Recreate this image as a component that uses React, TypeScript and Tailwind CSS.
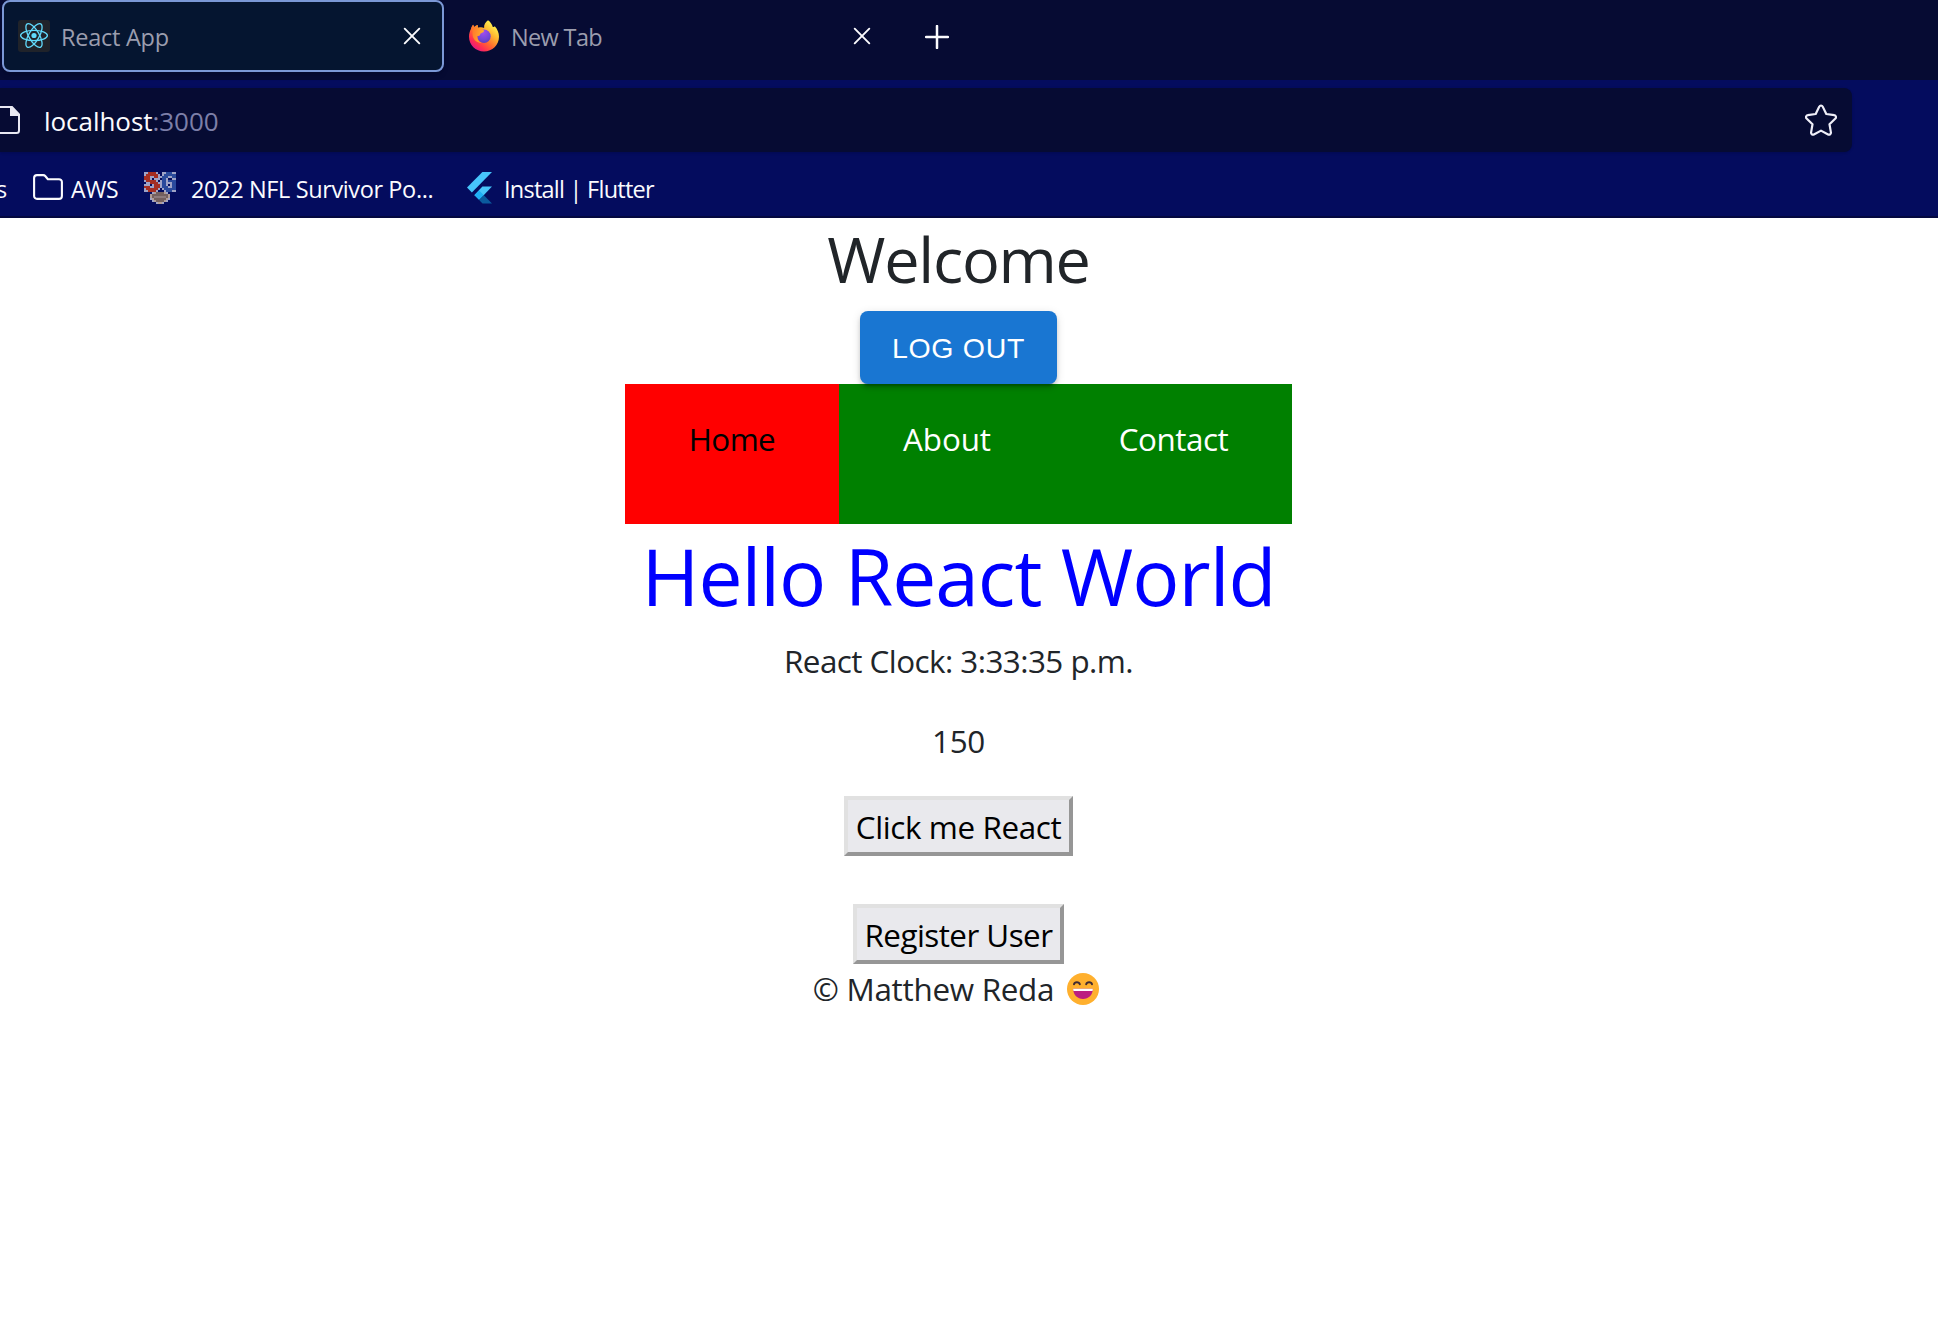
import React from "react";

function ReactIcon() {
  return (
    <svg viewBox="0 0 32 32" className="size-8 shrink-0" aria-hidden="true">
      <rect width="32" height="32" rx="3" fill="#20232a" />
      <g fill="none" stroke="#61dafb" strokeWidth="1.3">
        <ellipse cx="16" cy="15.5" rx="13.4" ry="5.2" />
        <ellipse cx="16" cy="15.5" rx="13.4" ry="5.2" transform="rotate(60 16 15.5)" />
        <ellipse cx="16" cy="15.5" rx="13.4" ry="5.2" transform="rotate(120 16 15.5)" />
      </g>
      <circle cx="16" cy="15.5" r="2.6" fill="#61dafb" />
    </svg>
  );
}

function FirefoxIcon() {
  return (
    <svg viewBox="0 0 32 32" className="size-8 shrink-0" aria-hidden="true">
      <defs>
        <linearGradient id="fxBody" x1="0.88" y1="0.1" x2="0.2" y2="0.95">
          <stop offset="0.05" stopColor="#fff44f" />
          <stop offset="0.35" stopColor="#ffb02e" />
          <stop offset="0.6" stopColor="#ff6a2f" />
          <stop offset="0.82" stopColor="#ff2f52" />
          <stop offset="1" stopColor="#e31587" />
        </linearGradient>
        <radialGradient id="fxGlobe" cx="0.45" cy="0.2" r="0.9">
          <stop offset="0" stopColor="#a34cf0" />
          <stop offset="0.6" stopColor="#7147d8" />
          <stop offset="1" stopColor="#5a3bb5" />
        </radialGradient>
        <linearGradient id="fxHead" x1="0" y1="0" x2="1" y2="0.3">
          <stop offset="0" stopColor="#ff6d2c" />
          <stop offset="1" stopColor="#ffb02c" />
        </linearGradient>
      </defs>
      <path
        d="M20 0.3c2.4 1.6 4 4 4.8 6.6 1 .3 1.6-.1 2-.6 2.6 3 4.200 6.500 4.200 10.500C31 25 24.400 31.500 16 31.500S1 25 1 16.800c0-3 .8-5.800 2.200-8.200.2-1.300.9-2.800 2-3.800.2 1 .6 1.700 1.200 2.200C7.300 6 8.400 5.300 9.700 5c-.2 1 0 2 .5 2.700 1.700-.5 4-.7 5.900.2C15.800 4.900 17.500 1.900 20 .3z"
        fill="url(#fxBody)"
      />
      <circle cx="16" cy="16.300" r="6.700" fill="url(#fxGlobe)" />
      <path
        d="M3.200 8.800c.2-1.400.9-2.900 2-4 .2 1 .6 1.700 1.200 2.200C7.300 6 8.400 5.300 9.700 5c-.2 1.700.6 3 1.800 4 1.500.6 3.500.6 4.700 1.700-.4 1.800-2.400 1.900-3.500 2.700-1 .9.200 2.300-3.300 2.600-.3 3 1.400 6 4.600 7-5.500 0-9.500-4-9.500-9 0-2 .3-3.700-1.300-5.200z"
        fill="url(#fxHead)"
      />
    </svg>
  );
}

function CloseIcon() {
  return (
    <svg viewBox="0 0 18 18" className="size-[18px] shrink-0" aria-hidden="true">
      <path d="M1.700 1.700l14.600 14.600M16.300 1.700L1.700 16.300" stroke="#fbfbfe" strokeWidth="1.900" strokeLinecap="round" />
    </svg>
  );
}

function PlusIcon() {
  return (
    <svg viewBox="0 0 24 24" className="size-6 shrink-0" aria-hidden="true">
      <path d="M12 1v22M1 12h22" stroke="#fbfbfe" strokeWidth="2.500" strokeLinecap="round" />
    </svg>
  );
}

function PageIcon() {
  return (
    <svg viewBox="0 0 20 28" className="h-7 w-5 shrink-0" aria-hidden="true">
      <path
        d="M-4 1h16L19 8.500V24.500a2.500 2.500 0 0 1-2.500 2.500H-4"
        fill="none"
        stroke="#e8e8f2"
        strokeWidth="2"
      />
      <path d="M10 1.500h2.500l6.500 7v1.500h-9z" fill="#e8e8f2" />
    </svg>
  );
}

function StarIcon() {
  return (
    <svg viewBox="0 0 32 32" className="size-8 shrink-0" aria-hidden="true">
      <path
        d="M14.300 2.600c.7-1.500 2.700-1.500 3.400 0l3.600 7.400 8 1.200c1.600.2 2.300 2.200 1.100 3.300l-5.900 5.800 1.400 8.100c.3 1.600-1.400 2.800-2.800 2.100L16 26.600l-7.100 3.900c-1.400.7-3.100-.5-2.800-2.100l1.400-8.100-5.900-5.800c-1.200-1.100-.5-3.100 1.100-3.300l8-1.200z"
        fill="none"
        stroke="#eeeef8"
        strokeWidth="2.200"
        strokeLinejoin="round"
      />
    </svg>
  );
}

function FolderIcon() {
  return (
    <svg viewBox="0 0 30 26" className="h-[26px] w-[30px] shrink-0" aria-hidden="true">
      <path
        d="M4 1.100h6.200c.8 0 1.500.3 2 .9l2.700 3.200H26a2.900 2.900 0 0 1 2.900 2.900V22a2.900 2.900 0 0 1-2.900 2.900H4A2.900 2.900 0 0 1 1.100 22V4A2.900 2.900 0 0 1 4 1.100z"
        fill="none"
        stroke="#fbfbfe"
        strokeWidth="2.100"
        strokeLinejoin="round"
      />
    </svg>
  );
}

const poolPixels = [
  "wwrrrrw..wwbbbww",
  "wrrrrrrw.wbbbbbb",
  "rrrwwrrwwbbbwwbb",
  "rrrw.www.bbw..ww",
  "wrrrrrw.wbbwbbbb",
  ".wwrrrrwwbbwwwbb",
  "www.wrrrwbbw.wbb",
  "rrrwwrrrwbbbwwbb",
  "wrrrrrrw.wbbbbbb",
  "wwrrrrw...wbbbww",
  "....wtddddtw....",
  "...tddddddddt...",
  "...tdggggggdt...",
  "...wtddddddtw...",
  "....wtddddtw....",
  "......wttw......",
];

const poolColors: Record<string, string> = {
  w: "#9fa3c6",
  r: "#a52e22",
  b: "#2a4a9c",
  t: "#b09c96",
  d: "#74605f",
  g: "#8d7b7c",
};

function PoolIcon() {
  return (
    <svg viewBox="0 0 16 16" className="size-8 shrink-0" shapeRendering="crispEdges" aria-hidden="true">
      {poolPixels.flatMap((row, y) =>
        row.split("").map((p, x) =>
          p === "." ? null : <rect key={`${x}-${y}`} x={x} y={y} width="1" height="1" fill={poolColors[p]} />
        )
      )}
    </svg>
  );
}

function FlutterIcon() {
  return (
    <svg viewBox="0 0 25 32" className="h-8 w-[25px] shrink-0" aria-hidden="true">
      <path d="M15.400 0H25L4.900 20.400 0 15.600z" fill="#47c5fb" />
      <path d="M15.400 14.600H25L16.700 23.200l-5 .200-4.400-.2z" fill="#47c5fb" />
      <path d="M7.300 23.200l4.800-4.800 4.800 4.800-4.800 4.800z" fill="#1fb0f6" />
      <path d="M12.100 28l4.800-4.800L25 31.500h-9.500z" fill="#0b5a9e" />
    </svg>
  );
}

function GrinEmoji() {
  return (
    <svg viewBox="0 0 32 32" className="size-8 shrink-0" role="img" aria-label="Grinning face with smiling eyes">
      <circle cx="16" cy="16" r="16" fill="#ffb02e" />
      <path
        d="M7 11.200c.7-2.600 5-2.600 5.800 0M19.200 11.200c.8-2.600 5.100-2.600 5.800 0"
        fill="none"
        stroke="#402a32"
        strokeWidth="2"
        strokeLinecap="round"
      />
      <path d="M6.200 15.700h19.600c0 6-4.200 10.300-9.800 10.300S6.200 21.700 6.200 15.700z" fill="#bb1d80" />
      <path d="M6.200 15.700h19.600c0 .9-.1 1.600-.3 2.300h-19c-.2-.7-.3-1.400-.3-2.300z" fill="#fff" />
    </svg>
  );
}

function TabStrip() {
  return (
    <div className="flex h-20 bg-[#060b33] pl-0.5 text-[23.5px] text-[#9b9dae]">
      <div className="flex h-[72px] w-[442px] items-center rounded-lg border-2 border-[#7b98d6] bg-[#051530] pr-[21px] pl-3.5 shadow-md">
        <div className="flex items-center gap-[11px]">
          <ReactIcon />
          <span className="pt-1 tracking-[-0.25px]">React App</span>
        </div>
        <div className="ml-auto">
          <CloseIcon />
        </div>
      </div>
      <div className="flex h-[72px] w-[427px] items-center pl-6">
        <FirefoxIcon />
        <span className="ml-[11px] pt-1 tracking-[-0.65px]">New Tab</span>
        <div className="ml-auto">
          <CloseIcon />
        </div>
      </div>
      <div className="ml-[54px] flex h-[74px] items-center">
        <PlusIcon />
      </div>
    </div>
  );
}

function AddressBar() {
  return (
    <div className="pt-2">
      <div className="flex h-16 w-[1852px] items-center rounded-r-lg bg-[#060b33] pr-[15px] text-[26px] shadow-sm">
        <PageIcon />
        <span className="ml-6 pt-[3px] tracking-[-0.05px] text-[#fbfbfe]">
          localhost<span className="text-[#7d7fa8]">:3000</span>
        </span>
        <div className="ml-auto">
          <StarIcon />
        </div>
      </div>
    </div>
  );
}

function Bookmarks() {
  return (
    <div className="flex h-[66px] items-center border-b-2 border-[#04083f] pt-2 text-[23.5px] text-[#fbfbfe]">
      <span className="flex w-[33px] justify-start">
        <span className="-ml-[4px] pt-[3px]">s</span>
      </span>
      <div className="pb-[3px]">
        <FolderIcon />
      </div>
      <span className="ml-[8px] w-[63px] pt-[3px] text-[23px] tracking-[-0.4px]">AWS</span>
      <span className="ml-[10px]">
        <PoolIcon />
      </span>
      <span className="ml-[15px] w-[276px] pt-[3px] tracking-[-0.38px]">2022 NFL Survivor Po...</span>
      <FlutterIcon />
      <span className="ml-3 pt-[3px] tracking-[-0.75px]">Install | Flutter</span>
    </div>
  );
}

export default function App() {
  return (
    <div className="min-h-[1318px] bg-white font-['Open_Sans','Noto_Sans',sans-serif] whitespace-nowrap">
      <header className="h-[218px] bg-[#040c5e]">
        <TabStrip />
        <AddressBar />
        <Bookmarks />
      </header>

      <main className="flex w-[1917px] flex-col items-center text-[31.4px] leading-[48px] text-[#212529]">
        <h1 className="pt-px text-[63px] leading-[80px] tracking-[-1.25px]">Welcome</h1>
        <button className="relative mt-3 h-[73px] w-[197px] rounded-lg bg-[#1976d2] font-['Liberation_Sans',Arial,sans-serif] text-[28.5px] tracking-[0.7px] text-white shadow-[0_6px_2px_-4px_rgba(0,0,0,0.2),0_4px_4px_0_rgba(0,0,0,0.14),0_2px_10px_0_rgba(0,0,0,0.12)]">
          LOG OUT
        </button>
        <nav className="flex h-[140px] w-[667px] bg-[#008000] text-white">
          <a className="w-[214px] bg-[#ff0000] pt-[31px] text-center tracking-[-0.6px] text-black">Home</a>
          <a className="w-[216px] pt-[31px] text-center tracking-[-0.1px]">About</a>
          <a className="w-[237px] pt-[31px] text-center tracking-[-0.45px]">Contact</a>
        </nav>
        <h1 className="pt-px text-[78.5px] leading-[101px] tracking-[-1px] text-[#0000ff]">Hello React World</h1>
        <p className="mt-[11px] tracking-[-0.54px]">React Clock: 3:33:35 p.m.</p>
        <p className="mt-8 tracking-[-0.3px]">150</p>
        <button className="mt-[31px] h-[60px] w-[229px] border-4 border-t-[#e1e1e1] border-r-[#969696] border-b-[#969696] border-l-[#e1e1e1] bg-[#e9e9ed] pt-0.5 tracking-[-0.38px] text-black">
          Click me React
        </button>
        <button className="mt-12 h-[60px] w-[211px] border-4 border-t-[#e1e1e1] border-r-[#969696] border-b-[#969696] border-l-[#e1e1e1] bg-[#e9e9ed] pt-0.5 tracking-[-0.55px] text-black">
          Register User
        </button>
        <footer className="mt-px flex items-center gap-[13px] pr-[5px] tracking-[-0.28px]">
          <span>© Matthew Reda</span>
          <GrinEmoji />
        </footer>
      </main>
    </div>
  );
}
